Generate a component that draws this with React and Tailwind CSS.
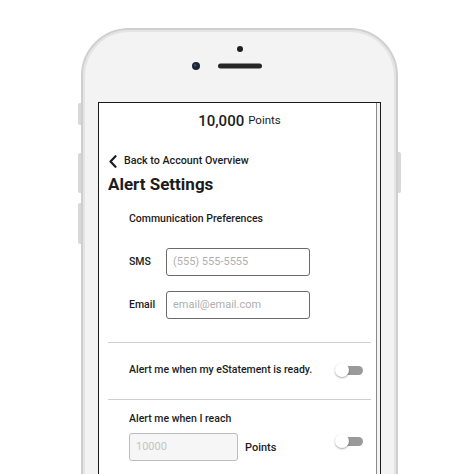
function Toggle({ className = "" }) {
  return (
    <div className={`relative flex h-[14px] w-[28px] items-center ${className}`}>
      <div className="ml-[4px] h-[9px] w-[24px] rounded-full bg-[#9a9a9a]" />
      <div className="absolute left-0 top-0 h-[14px] w-[14px] rounded-full bg-white shadow-[0_1px_2px_rgba(0,0,0,0.35)]" />
    </div>
  );
}

function Field({ label, placeholder }) {
  return (
    <div className="flex items-center">
      <span className="w-[37px] text-[10.5px] font-medium text-[#1c1c1c]">{label}</span>
      <div className="flex h-[28px] w-[144px] items-center rounded-[3px] border border-[#6b6b6b] px-[6px] text-[11px] text-[#b0b0b0]">
        {placeholder}
      </div>
    </div>
  );
}

export default function App() {
  return (
    <div
      className="relative h-[474px] w-[474px] overflow-hidden bg-white"
      style={{ fontFamily: "Roboto, 'Noto Sans', sans-serif" }}
    >
      {/* side buttons */}
      <div className="absolute left-[78px] top-[103px] h-[22px] w-[3px] rounded-l-[2px] bg-[#d8d8d8]" />
      <div className="absolute left-[78px] top-[153px] h-[40px] w-[3px] rounded-l-[2px] bg-[#d8d8d8]" />
      <div className="absolute left-[78px] top-[203px] h-[41px] w-[3px] rounded-l-[2px] bg-[#d8d8d8]" />
      <div className="absolute left-[398px] top-[152px] h-[41px] w-[3px] rounded-r-[2px] bg-[#d8d8d8]" />

      <div className="ml-[81px] mt-[28px] h-[480px] w-[317px] rounded-t-[48px] border-2 border-[#cfcfcf] bg-[#f3f3f3] px-[15px] shadow-[inset_0_0_0_2px_#e4e4e4]">
        <div className="flex h-[72px] flex-col items-center">
          <div className="mt-[16px] h-[6px] w-[6px] rounded-full bg-[#1e1e1e]" />
          <svg width="96" height="10" viewBox="0 0 96 10" className="mt-[9px]">
            <circle cx="4" cy="5" r="4" fill="#1d2433" />
            <circle cx="3.2" cy="4.2" r="1.3" fill="#3b4a66" />
            <rect x="26" y="2.5" width="44" height="5" rx="2.5" fill="#262626" />
          </svg>
        </div>

        <div className="flex h-[400px] border-[1.5px] border-b-0 border-[#1a1a1a] bg-white">
          <div className="flex-1 pl-[9px] pr-[5px] text-[#1c1c1c]">
            <div className="flex h-[36px] items-center justify-center">
              <span className="text-[15px] font-medium">10,000</span>
              <span className="ml-[4px] text-[11.5px]">Points</span>
            </div>

            <div className="mt-[14px] flex h-[16px] items-center">
              <svg width="8" height="13" viewBox="0 0 8 13" className="ml-[1px]">
                <polyline points="6.5,1.2 1.5,6.5 6.5,11.8" fill="none" stroke="#1c1c1c" strokeWidth="2.2" strokeLinecap="round" strokeLinejoin="round" />
              </svg>
              <span className="ml-[7px] text-[10.7px] font-medium">Back to Account Overview</span>
            </div>

            <h1 className="mt-[4px] text-[17px] font-bold leading-[22px]">Alert Settings</h1>

            <div className="pl-[21px] pr-[8px]">
              <p className="mt-[17px] text-[10.5px] font-medium leading-[14px]">
                Communication Preferences
              </p>
              <div className="mt-[22px] flex flex-col gap-[15px]">
                <Field label="SMS" placeholder="(555) 555-5555" />
                <Field label="Email" placeholder="email@email.com" />
              </div>
            </div>

            <div className="mt-[23px] h-px bg-[#cfcfcf]" />

            <div className="mt-[19px] flex h-[16px] items-center justify-between pl-[21px] pr-[8px]">
              <span className="text-[10.5px] font-medium">Alert me when my eStatement is ready.</span>
              <Toggle />
            </div>

            <div className="mt-[21px] h-px bg-[#cfcfcf]" />

            <div className="pl-[21px] pr-[8px]">
              <p className="mt-[12px] text-[10.5px] font-medium leading-[14px]">Alert me when I reach</p>
              <div className="mt-[7px] flex items-start">
                <div className="flex h-[28px] w-[109px] items-center rounded-[3px] border border-[#bdbdbd] bg-[#f6f6f6] px-[6px] text-[11px] text-[#c4c4c4]">
                  10000
                </div>
                <span className="ml-[7px] mt-[7px] text-[11px] font-medium">Points</span>
                <Toggle className="ml-auto mt-[1px]" />
              </div>
            </div>
          </div>
          <div className="w-[4px] border-l border-[#8a8a8a] bg-[#f4f4f4]" />
        </div>
      </div>
    </div>
  );
}
